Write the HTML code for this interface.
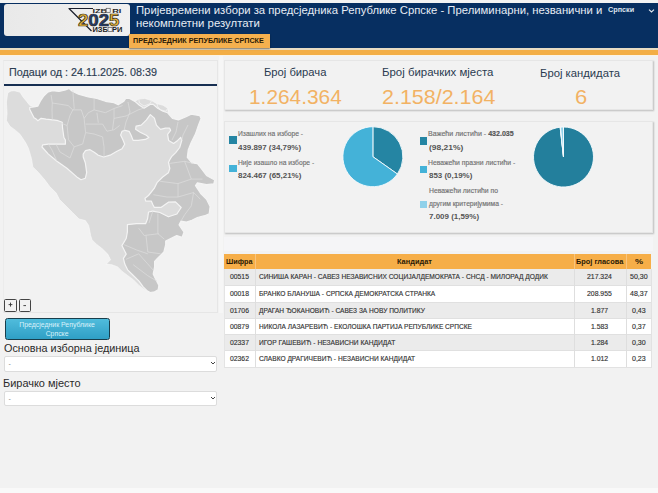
<!DOCTYPE html>
<html><head><meta charset="utf-8">
<style>
*{margin:0;padding:0;box-sizing:border-box}
html,body{width:658px;height:493px;overflow:hidden;background:#f2f2f2;font-family:"Liberation Sans",sans-serif}
.t{position:absolute;white-space:nowrap;line-height:1;transform-origin:0 0}
.t b{font-weight:700;color:#555}
.tk{-webkit-text-stroke:0.15px currentColor}
.bx{position:absolute}
svg{position:absolute;left:0;top:0}
</style></head><body>
<!-- header -->
<div class="bx" style="left:0;top:0;width:658px;height:3px;background:#f3f3f3"></div>
<div class="bx" style="left:0;top:2.5px;width:658px;height:45.3px;background:#072f61"></div>
<div class="bx" style="left:0;top:47.8px;width:658px;height:1.8px;background:#e8dcc4"></div>
<div class="bx" style="left:0;top:49.6px;width:658px;height:5px;background:#f3ae46"></div>
<div class="bx" style="left:0;top:54.6px;width:658px;height:1.6px;background:#fbf3e4"></div>
<div class="bx" style="left:4px;top:3.5px;width:126px;height:32px;background:linear-gradient(90deg,#e9e9e9,#f0f0f0);border-radius:3px"></div>
<div class="bx" style="left:128.8px;top:34.3px;width:141px;height:13.3px;background:#f5b04e;box-shadow:0 1px 1.5px rgba(0,0,0,.45)"></div>

<!-- left panel -->
<div class="bx" style="left:3px;top:59.5px;width:215px;height:253.5px;border:1px solid #e6e6e6;border-left-color:#ececec"></div>
<div class="bx" style="left:218.5px;top:56px;width:4.5px;height:257px;background:#f6f6f6"></div>
<div class="bx" style="left:4px;top:84.4px;width:213px;height:2px;background:#172f52"></div>

<!-- stats + charts boxes -->
<div class="bx" style="left:223.5px;top:60px;width:429px;height:50px;border:1px solid #e6e6e6;box-shadow:1px 1px 1.5px rgba(0,0,0,.22)"></div>
<div class="bx" style="left:223.5px;top:121px;width:429px;height:111.8px;border:1px solid #e6e6e6;box-shadow:1px 1px 1.5px rgba(0,0,0,.22)"></div>
<div class="bx" style="left:223.5px;top:237px;width:429px;height:14px;background:#f5f5f7"></div>

<!-- legend squares -->
<div class="bx" style="left:228.8px;top:136.4px;width:8px;height:7.6px;background:#2585a3"></div>
<div class="bx" style="left:228.8px;top:164.8px;width:8px;height:7.6px;background:#44b2d8"></div>
<div class="bx" style="left:419.6px;top:137px;width:7.7px;height:7.5px;background:#2585a3"></div>
<div class="bx" style="left:419.6px;top:165.6px;width:7.7px;height:7.4px;background:#44b2d8"></div>
<div class="bx" style="left:419.6px;top:200.5px;width:7.7px;height:7.4px;background:#8fd1ea"></div>

<!-- table -->
<div class="bx" style="left:224.3px;top:254.3px;width:427px;height:14.4px;background:#f6ae48"></div>
<div class="bx" style="left:224.3px;top:268.7px;width:427px;height:17.2px;background:#ebebeb"></div>
<div class="bx" style="left:224.3px;top:285.9px;width:427px;height:16.3px;background:#fff"></div>
<div class="bx" style="left:224.3px;top:302.2px;width:427px;height:16.4px;background:#ebebeb"></div>
<div class="bx" style="left:224.3px;top:318.6px;width:427px;height:16px;background:#fff"></div>
<div class="bx" style="left:224.3px;top:334.6px;width:427px;height:16.1px;background:#ebebeb"></div>
<div class="bx" style="left:224.3px;top:350.7px;width:427px;height:16.4px;background:#fff"></div>
<div class="bx" style="left:224.3px;top:367.1px;width:427px;height:1px;background:#e2e2e2"></div>
<div class="bx" style="left:224.3px;top:285.4px;width:427px;height:1px;background:#e0e0e0"></div>
<div class="bx" style="left:224.3px;top:301.7px;width:427px;height:1px;background:#e0e0e0"></div>
<div class="bx" style="left:224.3px;top:318.1px;width:427px;height:1px;background:#e0e0e0"></div>
<div class="bx" style="left:224.3px;top:334.1px;width:427px;height:1px;background:#e0e0e0"></div>
<div class="bx" style="left:224.3px;top:350.2px;width:427px;height:1px;background:#e0e0e0"></div>
<div class="bx" style="left:255px;top:254.3px;width:1px;height:113px;background:#dedede"></div>
<div class="bx" style="left:573.8px;top:254.3px;width:1px;height:113px;background:#dedede"></div>
<div class="bx" style="left:626px;top:254.3px;width:1px;height:113px;background:#dedede"></div>
<div class="bx" style="left:650.8px;top:268.7px;width:1px;height:99px;background:#e2e2e2"></div>
<div class="bx" style="left:224.3px;top:268.7px;width:1px;height:99px;background:#e4e4e4"></div>
<div class="bx" style="left:255px;top:254.3px;width:1px;height:14.4px;background:#f8c47e"></div>
<div class="bx" style="left:573.8px;top:254.3px;width:1px;height:14.4px;background:#f8c47e"></div>
<div class="bx" style="left:626px;top:254.3px;width:1px;height:14.4px;background:#f8c47e"></div>

<!-- buttons / selects -->
<div class="bx" style="left:4.3px;top:298.9px;width:12.5px;height:12.7px;border:1.3px solid #444;border-radius:1.5px;background:#f2f2f2"></div>
<div class="bx" style="left:19.1px;top:298.9px;width:11.5px;height:12.7px;border:1.3px solid #444;border-radius:1.5px;background:#f2f2f2"></div>
<div class="bx" style="left:4.6px;top:317.7px;width:105px;height:22.4px;border:1.6px solid #183e4c;border-radius:2.5px;background:linear-gradient(#50bcdc,#2f9fc5)"></div>
<div class="t" style="left:4.6px;width:105px;text-align:center;top:320.2px;font-size:6.9px;line-height:9.3px;color:#d9f1fa;white-space:normal">Предсједник Републике<br>Српске</div>
<div class="bx" style="left:4.1px;top:356.2px;width:213.4px;height:15.4px;background:#fff;border:1px solid #dcdcdc;border-radius:2px"></div>
<div class="bx" style="left:4.1px;top:391.3px;width:213.4px;height:14.5px;background:#fff;border:1px solid #dcdcdc;border-radius:2px"></div>
<div class="t" style="left:8.5px;top:360px;font-size:7px;color:#888">-</div>
<div class="t" style="left:8.5px;top:394.5px;font-size:7px;color:#888">-</div>
<div class="bx" style="left:0;top:487.8px;width:658px;height:6px;background:#f9f9f9"></div>

<svg width="658" height="493" viewBox="0 0 658 493">
 <!-- map -->
 <path d="M7.8 92.8 L11.0 91.0 L14.2 90.7 L19.9 92.1 L23.2 97.2 L26.5 101.2 L29.7 105.3 L33.8 106.9 L37.9 106.1 L40.3 101.2 L43.5 96.4 L47.6 92.3 L52.5 90.7 L59.0 91.5 L65.5 89.9 L69.2 88.5 L71.4 90.6 L78.5 94.2 L88.4 97.0 L96.9 98.5 L105.4 101.3 L114.0 102.7 L118.2 104.8 L123.9 101.3 L125.7 98.5 L129.6 98.4 L134.9 101.4 L138.7 99.1 L144.8 98.4 L151.6 100.6 L156.9 103.7 L163.0 105.2 L167.6 108.2 L168.5 114.2 L172.7 118.5 L178.4 119.9 L185.5 117.0 L191.2 114.2 L199.7 115.6 L201.1 118.5 L198.3 125.6 L195.4 134.1 L191.2 142.6 L188.3 149.7 L187.3 157.3 L191.9 162.8 L197.4 163.7 L201.0 168.2 L206.5 175.5 L214.7 180.1 L213.8 183.8 L206.5 184.7 L197.4 182.8 L195.5 185.6 L201.0 193.8 L206.5 199.3 L210.1 206.6 L209.2 213.9 L204.7 215.7 L197.4 217.5 L191.9 220.3 L186.4 222.1 L180.9 221.2 L179.1 224.8 L182.8 230.3 L184.0 232.0 L182.1 237.4 L176.7 235.6 L165.7 241.0 L165.7 244.7 L163.9 252.0 L160.2 255.6 L157.4 258.4 L154.6 261.3 L154.6 266.9 L153.2 274.0 L154.6 276.9 L158.9 285.4 L158.2 289.7 L154.6 291.8 L150.3 292.5 L144.7 289.7 L139.0 285.4 L133.3 279.7 L127.6 275.5 L121.9 271.2 L117.7 266.9 L112.0 264.8 L106.3 264.1 L110.6 259.8 L107.7 254.1 L102.0 248.5 L96.4 244.2 L92.1 239.9 L90.7 235.7 L88.7 225.5 L85.4 220.6 L79.0 219.0 L72.5 212.5 L66.0 206.0 L59.5 199.5 L56.2 193.0 L49.7 186.5 L44.9 180.0 L38.5 172.6 L32.8 166.9 L31.4 158.4 L28.5 148.5 L25.7 142.8 L20.0 134.3 L15.6 130.4 L9.9 126.2 L6.4 120.5 L7.1 113.4 L6.4 102.0Z" fill="#dcdcdc" stroke="#fafafa" stroke-width="0.6"/>
 <path d="M29.7 107.5 L33.8 106.9 L37.9 106.1 L40.3 101.2 L43.5 96.4 L47.6 92.3 L52.5 90.7 L59.0 91.5 L65.5 89.9 L69.2 88.5 L71.4 90.6 L78.5 94.2 L88.4 97.0 L96.9 98.5 L105.4 101.3 L114.0 102.7 L118.2 104.8 L123.9 101.3 L125.7 98.5 L129.6 98.4 L134.9 101.4 L139.4 105.2 L144.0 108.2 L150.1 104.4 L153.1 104.4 L157.7 108.2 L163.0 111.3 L167.6 112.8 L172.7 118.5 L178.4 119.9 L185.5 117.0 L191.2 114.2 L199.7 115.6 L201.1 118.5 L198.3 125.6 L195.4 134.1 L191.2 142.6 L188.3 149.7 L187.3 157.3 L191.9 162.8 L197.4 163.7 L201.0 168.2 L206.5 175.5 L214.7 180.1 L213.8 183.8 L206.5 184.7 L197.4 182.8 L195.5 185.6 L201.0 193.8 L206.5 199.3 L210.1 206.6 L209.2 213.9 L204.7 215.7 L197.4 217.5 L191.9 220.3 L186.4 222.1 L180.9 221.2 L179.1 224.8 L182.8 230.3 L184.0 232.0 L182.1 237.4 L176.7 235.6 L165.7 241.0 L165.7 244.7 L163.9 252.0 L160.2 255.6 L157.4 258.4 L154.6 261.3 L154.6 266.9 L153.2 274.0 L154.6 276.9 L158.9 285.4 L158.2 289.7 L154.6 291.8 L150.3 292.5 L147.5 291.1 L143.2 286.8 L139.0 281.1 L133.3 275.5 L127.6 269.8 L124.8 264.1 L123.4 258.4 L126.2 254.1 L124.8 251.3 L121.9 245.6 L126.2 238.5 L127.4 231.9 L127.4 224.6 L136.5 223.7 L145.6 223.7 L147.5 219.1 L148.5 212.0 L152.8 211.1 L159.9 212.5 L168.4 216.8 L176.9 214.0 L181.2 207.5 L175.5 201.9 L168.4 202.2 L161.3 207.3 L154.2 207.3 L152.8 204.4 L151.4 201.2 L145.7 201.2 L145.0 198.3 L148.5 195.5 L154.2 188.4 L157.0 182.7 L162.7 177.0 L168.4 172.8 L169.8 168.5 L168.5 162.5 L169.6 160.0 L171.6 156.6 L175.7 152.6 L179.7 147.5 L181.8 140.4 L180.7 137.4 L177.7 140.4 L173.6 143.4 L168.6 140.4 L167.6 134.3 L170.6 130.3 L169.6 128.2 L165.5 128.2 L160.5 129.3 L156.4 125.2 L154.4 118.1 L150.3 114.6 L146.3 120.1 L141.2 125.2 L136.1 126.2 L135.6 129.3 L140.2 132.3 L146.3 135.3 L148.8 137.4 L145.3 139.4 L138.2 140.4 L133.1 140.4 L131.1 135.3 L129.1 131.3 L125.0 130.3 L122.0 131.4 L120.6 135.1 L122.9 139.7 L124.7 144.2 L122.0 148.8 L116.5 151.5 L110.1 155.2 L103.7 157.0 L98.3 155.2 L94.6 152.4 L90.0 149.7 L85.5 150.6 L83.2 154.0 L83.2 157.0 L85.3 162.7 L86.7 172.6 L85.3 178.3 L81.0 179.7 L76.8 176.9 L66.9 168.3 L56.9 161.2 L48.4 154.1 L42.0 147.0 L42.7 144.9 L48.4 144.2 L56.9 144.2 L65.4 144.2 L65.4 140.0 L63.9 137.5 L62.5 127.6 L62.2 122.3 L58.1 120.7 L52.5 119.9 L46.0 119.1 L41.1 118.3 L37.9 120.7 L36.2 119.1 L34.0 117.7 L32.2 114.2 L29.7 109.4Z" fill="#c7c7c7" stroke="#f4f4f4" stroke-width="1.2" stroke-linejoin="round"/>
 <path d="M52.3 103.0 L60.0 104.2 L68.1 105.5 L72.8 109.9 M51.1 95.0 L52.3 103.0 L52.0 110.0 L52.3 119.8 M72.8 90.0 L73.5 100.0 L74.2 108.5 L72.8 109.9 M72.8 109.9 L81.3 109.9 L84.1 118.4 L85.6 132.6 L82.7 144.0 L74.2 146.8 L68.5 139.7 L67.1 125.5 L69.9 115.6 L72.8 109.9 M60.0 122.7 L67.1 125.5 M94.1 98.5 L94.1 109.9 L88.4 112.7 L84.1 118.4 M94.1 109.9 L105.4 112.7 L114.0 108.5 L122.5 105.6 M85.6 124.1 L102.6 124.1 L106.9 131.2 L114.0 129.8 L119.6 125.5 M85.6 132.6 L94.1 134.0 L102.6 136.9 L104.0 146.8 L104.0 156.0 M96.9 112.7 L98.3 122.7 M114.0 108.5 L114.0 118.4 L112.5 129.8 M128.0 102.0 L130.0 112.0 L126.0 122.0 L124.0 130.5 M114.0 118.4 L126.0 116.0 L138.0 110.0 L144.0 108.0 M56.0 144.2 L60.0 152.0 L70.0 158.0 L74.2 146.8 M48.4 144.2 L52.0 150.0 L56.9 161.2 M169.0 163.5 L184.6 161.3 L193.6 163.5 M184.6 161.3 L191.3 179.1 L202.5 179.1 M188.0 125.0 L183.0 135.0 L181.8 140.4 M178.0 122.0 L176.0 132.0 L172.0 140.0 M160.1 181.3 L178.0 183.6 L191.3 179.1 M178.0 183.6 L178.0 197.0 L166.8 197.0 L153.4 194.7 M178.0 197.0 L193.6 192.5 L200.3 199.2 M193.6 192.5 L191.3 205.9 L184.6 214.8 L180.9 221.2 M157.9 213.6 L157.9 233.7 L164.3 239.2 M138.7 228.2 L144.2 235.5 L158.8 233.7 M146.0 235.5 L147.8 252.0 L160.6 253.8 M124.1 244.7 L136.9 250.1 L147.8 253.8 M126.0 259.3 L138.7 253.8 L153.3 270.2 M133.2 264.7 L147.8 275.7 L157.0 281.2 M152.8 211.1 L149.0 223.0" fill="none" stroke="#dedede" stroke-width="0.7" stroke-linejoin="round"/>
 <path d="M138.7 99.1 L144.8 98.4 L151.6 100.6 L150.1 103.7 L144.0 106.0 L139.4 102.9Z" fill="#dcdcdc" stroke="#f4f4f4" stroke-width="0.8"/>
 <path d="M156.9 103.7 L163.0 105.2 L167.6 108.2 L166.0 111.3 L160.7 109.8 L157.7 106.7Z" fill="#dcdcdc" stroke="#f4f4f4" stroke-width="0.8"/>
 <!-- pies -->
 <g stroke="#f6fbfd" stroke-width="0.9" stroke-linejoin="round">
 <path d="M372.9 156.7 L372.90 126.70 A30 30 0 0 1 397.40 174.01Z" fill="#2585a3"/><path d="M372.9 156.7 L397.40 174.01 A30 30 0 1 1 372.90 126.70Z" fill="#44b2d8"/>
 <path d="M563.5 157 L563.50 127.00 A30 30 0 1 1 560.13 127.19Z" fill="#237f9c"/><path d="M563.5 157 L560.13 127.19 A30 30 0 0 1 560.49 127.15Z" fill="#44b2d8"/><path d="M563.5 157 L560.49 127.15 A30 30 0 0 1 563.50 127.00Z" fill="#8fd1ea"/>
 </g>
 <path d="M8.6 304.6 H12.4 M10.5 302.6 V306.6 M23.4 305.6 H26" stroke="#333" stroke-width="0.9" fill="none"/>
 <!-- chevrons -->
 <path d="M649 9.6 L651.5 12 L654 9.6" fill="none" stroke="#e2e8f0" stroke-width="1.1"/>
 <path d="M211 362 L213 364 L215 362" fill="none" stroke="#444" stroke-width="1"/>
 <path d="M211 397 L213 399 L215 397" fill="none" stroke="#444" stroke-width="1"/>
 <!-- logo -->
 <g>
  <path d="M68.5 8.5 L93 8.5 M69 8.5 L91.5 31" fill="none" stroke="#1a1e2c" stroke-width="1.2"/>
  <text x="92.4" y="12.7" font-family="Liberation Sans" font-weight="bold" font-size="6.2" fill="#2a2a2a" textLength="29" lengthAdjust="spacingAndGlyphs">IZB&#160;&#160;RI</text>
  <rect x="106.2" y="8.3" width="4" height="4" fill="#f4f4f4" stroke="#555" stroke-width="0.7"/>
  <text x="78" y="25.6" font-family="Liberation Sans" font-weight="bold" font-size="16.2" textLength="41.5" lengthAdjust="spacingAndGlyphs" stroke="#3a3218" stroke-width="0.7"><tspan fill="#e8b53c">2</tspan><tspan fill="#1b3a7e">02</tspan><tspan fill="#e8b53c">5</tspan></text>
  <text x="92.4" y="31.8" font-family="Liberation Sans" font-weight="bold" font-size="6.6" fill="#222" textLength="30" lengthAdjust="spacingAndGlyphs">ИЗБ&#160;&#160;РИ</text>
  <rect x="108" y="27.3" width="4.2" height="4.2" fill="#f4f4f4" stroke="#555" stroke-width="0.7"/>
 </g>
</svg>
<div class="t" style="left:136.30px;top:4.99px;font-size:11.3px;font-weight:400;color:#e6ecf4;transform:scaleX(0.9999)">Пријевремени избори за предсједника Републике Српске - Прелиминарни, незванични и</div>
<div class="t" style="left:136.45px;top:18.39px;font-size:11.3px;font-weight:400;color:#e6ecf4;transform:scaleX(1.0066)">некомплетни резултати</div>
<div class="t" style="left:608.12px;top:7.39px;font-size:6.6px;font-weight:700;color:#dfe6ef;transform:scaleX(1.1011)">Српски</div>
<div class="t" style="left:132.86px;top:38.29px;font-size:6.6px;font-weight:700;color:#2a1a06;transform:scaleX(1.0895)">ПРЕДСЈЕДНИК РЕПУБЛИКЕ СРПСКЕ</div>
<div class="t tk" style="left:9.07px;top:66.95px;font-size:11px;font-weight:400;color:#2c3d52;transform:scaleX(0.9793)">Подаци од : 24.11.2025. 08:39</div>
<div class="t" style="left:263.68px;top:67.45px;font-size:11px;font-weight:400;color:#2a3b50;transform:scaleX(1.0191)">Број бирача</div>
<div class="t" style="left:381.86px;top:67.45px;font-size:11px;font-weight:400;color:#2a3b50;transform:scaleX(1.0381)">Број бирачких мјеста</div>
<div class="t" style="left:539.88px;top:67.65px;font-size:11px;font-weight:400;color:#2a3b50;transform:scaleX(1.0239)">Број кандидата</div>
<div class="t" style="left:248.90px;top:86.92px;font-size:20.8px;font-weight:400;color:#f2b264;transform:scaleX(1.0033)">1.264.364</div>
<div class="t" style="left:381.87px;top:86.82px;font-size:20.8px;font-weight:400;color:#f2b264;transform:scaleX(1.0319)">2.158/2.164</div>
<div class="t" style="left:574.54px;top:86.92px;font-size:20.8px;font-weight:400;color:#f2b264;transform:scaleX(1.0564)">6</div>
<div class="t tk" style="left:237.92px;top:130.45px;font-size:7px;font-weight:400;color:#707070;transform:scaleX(0.9576)">Изашлих на изборе -</div>
<div class="t" style="left:238.40px;top:144.15px;font-size:7px;font-weight:700;color:#555;transform:scaleX(1.1330)">439.897 (34,79%)</div>
<div class="t tk" style="left:237.92px;top:158.55px;font-size:7px;font-weight:400;color:#707070;transform:scaleX(0.9557)">Није изашло на изборе -</div>
<div class="t" style="left:238.12px;top:172.25px;font-size:7px;font-weight:700;color:#555;transform:scaleX(1.1382)">824.467 (65,21%)</div>
<div class="t tk" style="left:428.29px;top:130.45px;font-size:7px;font-weight:400;color:#707070;transform:scaleX(1.0101)">Важећи листићи - <b>432.035</b></div>
<div class="t" style="left:428.50px;top:144.15px;font-size:7px;font-weight:700;color:#555;transform:scaleX(1.2036)">(98,21%)</div>
<div class="t tk" style="left:428.31px;top:158.55px;font-size:7px;font-weight:400;color:#707070;transform:scaleX(0.9703)">Неважећи празни листићи -</div>
<div class="t" style="left:428.52px;top:172.25px;font-size:7px;font-weight:700;color:#555;transform:scaleX(1.1360)">853 (0,19%)</div>
<div class="t tk" style="left:428.51px;top:186.55px;font-size:7px;font-weight:400;color:#707070;transform:scaleX(0.9729)">Неважећи листићи по</div>
<div class="t tk" style="left:429.00px;top:199.85px;font-size:7px;font-weight:400;color:#707070;transform:scaleX(0.9616)">другим критеријумима -</div>
<div class="t" style="left:428.72px;top:213.25px;font-size:7px;font-weight:700;color:#555;transform:scaleX(1.1379)">7.009 (1,59%)</div>
<div class="t" style="left:3.60px;top:343.02px;font-size:10.8px;font-weight:400;color:#2a2a2a;transform:scaleX(1.0026)">Основна изборна јединица</div>
<div class="t" style="left:3.34px;top:377.72px;font-size:10.8px;font-weight:400;color:#2a2a2a;transform:scaleX(1.0140)">Бирачко мјесто</div>
<div class="t" style="left:226.18px;top:258.45px;font-size:7px;font-weight:700;color:#2a1a06;transform:scaleX(1.0337)">Шифра</div>
<div class="t" style="left:396.77px;top:258.45px;font-size:7px;font-weight:700;color:#2a1a06;transform:scaleX(1.0574)">Кандидат</div>
<div class="t" style="left:575.87px;top:258.45px;font-size:7px;font-weight:700;color:#2a1a06;transform:scaleX(1.0539)">Број гласова</div>
<div class="t" style="left:634.87px;top:258.45px;font-size:7px;font-weight:700;color:#2a1a06;transform:scaleX(1.3043)">%</div>
<div class="t tk" style="left:258.66px;top:273.25px;font-size:7px;font-weight:400;color:#333;transform:scaleX(0.9473)">СИНИША КАРАН - САВЕЗ НЕЗАВИСНИХ СОЦИЈАЛДЕМОКРАТА - СНСД - МИЛОРАД ДОДИК</div>
<div class="t tk" style="left:258.66px;top:290.45px;font-size:7px;font-weight:400;color:#333;transform:scaleX(0.9477)">БРАНКО БЛАНУША - СРПСКА ДЕМОКРАТСКА СТРАНКА</div>
<div class="t tk" style="left:258.66px;top:306.75px;font-size:7px;font-weight:400;color:#333;transform:scaleX(0.9407)">ДРАГАН ЂОКАНОВИЋ - САВЕЗ ЗА НОВУ ПОЛИТИКУ</div>
<div class="t tk" style="left:258.66px;top:323.15px;font-size:7px;font-weight:400;color:#333;transform:scaleX(0.9383)">НИКОЛА ЛАЗАРЕВИЋ - ЕКОЛОШКА ПАРТИЈА РЕПУБЛИКЕ СРПСКЕ</div>
<div class="t tk" style="left:258.66px;top:339.15px;font-size:7px;font-weight:400;color:#333;transform:scaleX(0.9506)">ИГОР ГАШЕВИЋ - НЕЗАВИСНИ КАНДИДАТ</div>
<div class="t tk" style="left:258.66px;top:355.25px;font-size:7px;font-weight:400;color:#333;transform:scaleX(0.9414)">СЛАВКО ДРАГИЧЕВИЋ - НЕЗАВИСНИ КАНДИДАТ</div>
<div class="t tk" style="left:230.46px;top:273.25px;font-size:7px;font-weight:400;color:#333;transform:scaleX(0.9737)">00515</div>
<div class="t tk" style="left:587.36px;top:273.25px;font-size:7px;font-weight:400;color:#333;transform:scaleX(0.9800)">217.324</div>
<div class="t tk" style="left:629.75px;top:273.25px;font-size:7px;font-weight:400;color:#333;transform:scaleX(1.0059)">50,30</div>
<div class="t tk" style="left:230.46px;top:290.45px;font-size:7px;font-weight:400;color:#333;transform:scaleX(0.9737)">00018</div>
<div class="t tk" style="left:587.48px;top:290.45px;font-size:7px;font-weight:400;color:#333;transform:scaleX(0.9800)">208.955</div>
<div class="t tk" style="left:629.75px;top:290.45px;font-size:7px;font-weight:400;color:#333;transform:scaleX(1.0059)">48,37</div>
<div class="t tk" style="left:230.46px;top:306.75px;font-size:7px;font-weight:400;color:#333;transform:scaleX(0.9737)">01706</div>
<div class="t tk" style="left:591.15px;top:306.75px;font-size:7px;font-weight:400;color:#333;transform:scaleX(0.9800)">1.877</div>
<div class="t tk" style="left:631.63px;top:306.75px;font-size:7px;font-weight:400;color:#333;transform:scaleX(1.0059)">0,43</div>
<div class="t tk" style="left:230.46px;top:323.15px;font-size:7px;font-weight:400;color:#333;transform:scaleX(0.9737)">00879</div>
<div class="t tk" style="left:591.15px;top:323.15px;font-size:7px;font-weight:400;color:#333;transform:scaleX(0.9800)">1.583</div>
<div class="t tk" style="left:631.76px;top:323.15px;font-size:7px;font-weight:400;color:#333;transform:scaleX(1.0059)">0,37</div>
<div class="t tk" style="left:230.46px;top:339.15px;font-size:7px;font-weight:400;color:#333;transform:scaleX(0.9737)">02337</div>
<div class="t tk" style="left:591.15px;top:339.15px;font-size:7px;font-weight:400;color:#333;transform:scaleX(0.9800)">1.284</div>
<div class="t tk" style="left:631.63px;top:339.15px;font-size:7px;font-weight:400;color:#333;transform:scaleX(1.0059)">0,30</div>
<div class="t tk" style="left:230.46px;top:355.25px;font-size:7px;font-weight:400;color:#333;transform:scaleX(0.9737)">02362</div>
<div class="t tk" style="left:591.15px;top:355.25px;font-size:7px;font-weight:400;color:#333;transform:scaleX(0.9800)">1.012</div>
<div class="t tk" style="left:631.63px;top:355.25px;font-size:7px;font-weight:400;color:#333;transform:scaleX(1.0059)">0,23</div>
</body></html>
